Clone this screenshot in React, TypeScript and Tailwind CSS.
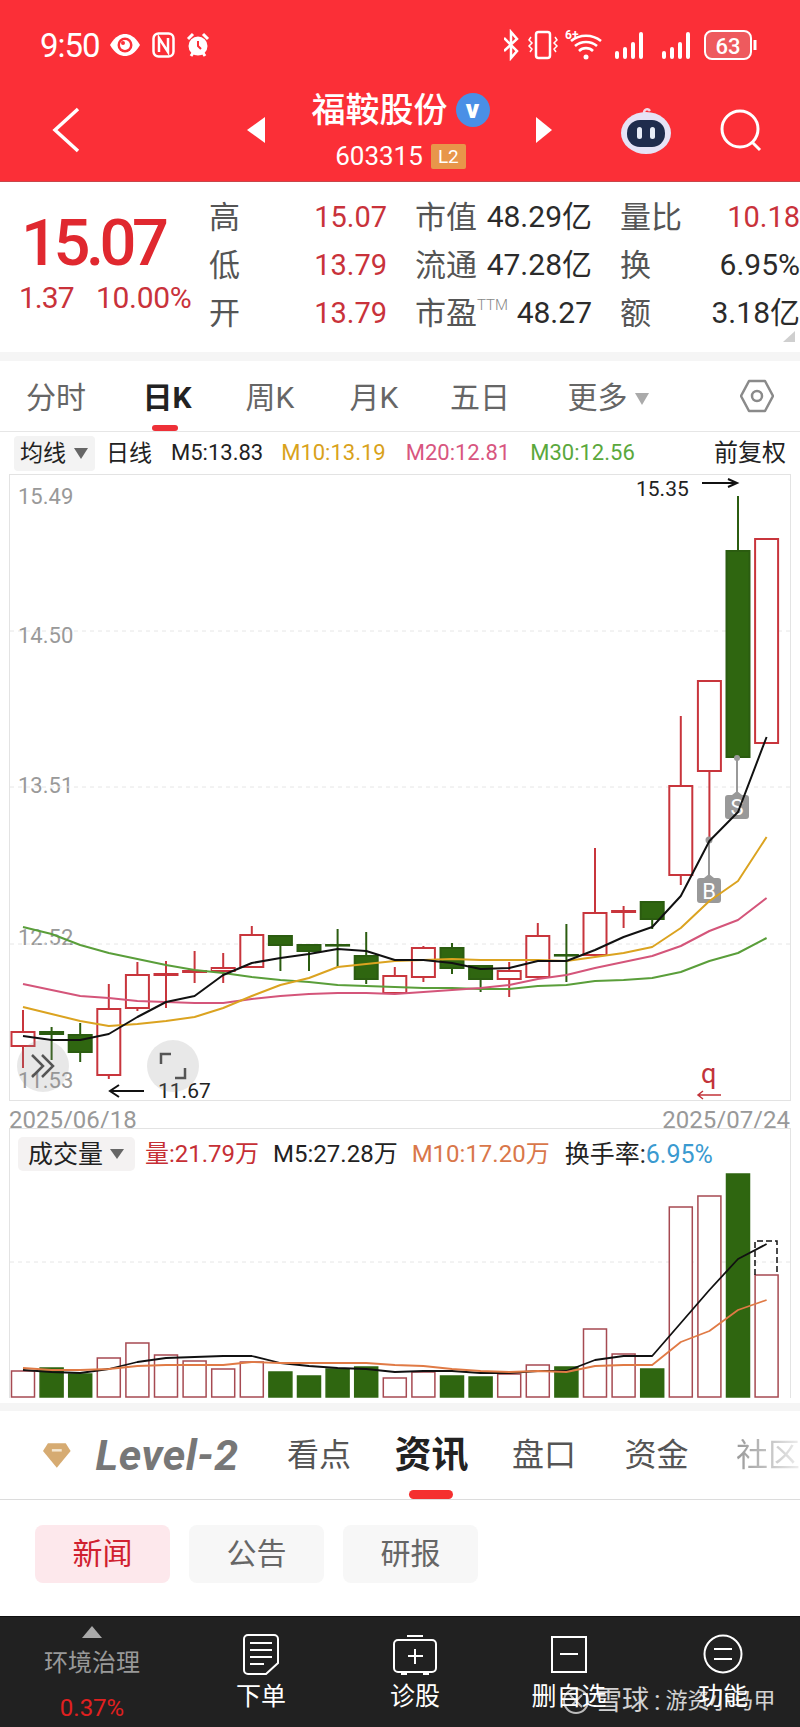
import React from "react";

const X = (i: number) => 23 + i * 28.6;

// type, body top, body bottom, wick top, wick bottom (page y)
const candles: [string, number, number, number, number][] = [
    ["r", 1032, 1046, 1010, 1068],
    ["g", 1032, 1034, 1027, 1060],
    ["g", 1035, 1052, 1023, 1062],
    ["r", 1009, 1075, 984, 1079],
    ["r", 975, 1008, 962, 1011],
    ["r", 974, 975, 961, 1008],
    ["r", 971, 972, 951, 983],
    ["r", 968, 971, 953, 983],
    ["r", 935, 967, 926, 967],
    ["g", 936, 945, 936, 971],
    ["g", 945, 951, 945, 971],
    ["g", 945, 945.6, 929, 967],
    ["g", 956, 979, 932, 984],
    ["r", 976, 993, 967, 993],
    ["r", 948, 977, 946, 982],
    ["g", 948, 968, 943, 974],
    ["g", 966, 979, 966, 992],
    ["r", 971, 979, 962, 997],
    ["r", 936, 977, 923, 977],
    ["g", 955, 955.6, 924, 982],
    ["r", 913, 955, 848, 955],
    ["r", 911, 912, 906, 928],
    ["g", 902, 919, 902, 929],
    ["r", 786, 875, 716, 885],
    ["r", 681, 771, 681, 840],
    ["g", 551, 757, 496, 757],
    ["r", 539, 743, 539, 743],
];

const ma5 = [1036, 1040, 1040, 1034, 1017, 1002, 996, 975, 963, 958, 954, 949, 951, 960, 960, 963, 969, 968, 961, 961, 950, 937, 927, 896, 841, 812, 737];
const ma10 = [1007, 1014, 1021, 1026, 1024, 1021, 1017, 1008, 996, 985, 978, 967, 964, 961, 960, 959, 960, 960, 960, 961, 957, 953, 947, 928, 901, 881, 837];
const ma20 = [984, 990, 996, 998, 1001, 1002, 1003, 1003, 999, 996, 994, 993, 993, 994, 992, 990, 988, 985, 979, 975, 968, 962, 956, 946, 931, 920, 898];
const ma30 = [927, 934, 945, 953, 959, 965, 970, 973, 977, 980, 982, 985, 986, 987, 988, 988, 989, 989, 986, 985, 981, 980, 978, 972, 961, 953, 938];

const volTops = [1371, 1368, 1374, 1358, 1343, 1355, 1361, 1369, 1362, 1372, 1376, 1369, 1367, 1378, 1372, 1376, 1377, 1374, 1365, 1367, 1329, 1354, 1369, 1207, 1196, 1174, 1275];
const volMa5 = [1370, 1372, 1373, 1369, 1362, 1358, 1357, 1356, 1356, 1363, 1366, 1368, 1369, 1372, 1371, 1371, 1373, 1373, 1371, 1371, 1360, 1356, 1356, 1323, 1290, 1259, 1244];
const volMa10 = [1368, 1370, 1370, 1369, 1366, 1365, 1365, 1365, 1362, 1363, 1363, 1363, 1363, 1365, 1366, 1369, 1371, 1372, 1371, 1372, 1366, 1365, 1365, 1342, 1331, 1310, 1300];

const pts = (ys: number[]) => ys.map((y, i) => `${X(i)},${y}`).join(" ");

function StatusIcons() {
    return (
        <svg width="253" height="32" viewBox="0 0 253 32" className="block" fill="none" stroke="#fff" strokeWidth="2">
            <path d="M0 9l13 13-6 7V3l6 7L0 22" strokeWidth="2.500"/>
            <rect x="32" y="3" width="14" height="26" rx="2.5" strokeWidth="2.5"/>
            <path d="M27 8l-2 3 3 3-3 3 3 3-2 3M51 8l2 3-3 3 3 3-3 3 2 3" strokeWidth="1.5"/>
            <path d="M67 12a24 24 0 0 1 30 0M71 17a17 17 0 0 1 22 0M75 22a10 10 0 0 1 14 0" strokeWidth="2.6"/>
            <circle cx="82" cy="28" r="2.500" fill="#fff" stroke="none"/>
            <text x="61" y="10" fill="#fff" stroke="none" fontSize="12" fontWeight="700">6+</text>
            <g fill="#fff" stroke="none">
                <rect x="111" y="22" width="4" height="8" rx="2"/>
                <rect x="119" y="18" width="4" height="12" rx="2"/>
                <rect x="127" y="13" width="4" height="17" rx="2"/>
                <rect x="135" y="3" width="4" height="27" rx="2"/>
                <rect x="158" y="22" width="4" height="8" rx="2"/>
                <rect x="166" y="18" width="4" height="12" rx="2"/>
                <rect x="174" y="13" width="4" height="17" rx="2"/>
                <rect x="182" y="3" width="4" height="27" rx="2"/>
            </g>
            <rect x="201" y="2" width="46" height="28" rx="7" fill="#ee5a5e"/>
            <path d="M251 11v10" strokeWidth="3"/>
            <text x="224" y="24.500" textAnchor="middle" fill="#fff" stroke="none" fontSize="22" fontWeight="500">63</text>
        </svg>
    );
}

function Header() {
    return (
        <div className="h-[181px] bg-[#fb2f37] text-white">
            <div className="flex h-[90px] items-center justify-between pl-[40px] pr-[43px]">
                <div className="flex items-center">
                    <span className="text-[33px] leading-none tracking-[-1px]">9:50</span>
                    <svg className="ml-[9px]" width="32" height="24" viewBox="0 0 32 24">
                        <path d="M1 12C6 3 12 1 16 1s10 2 15 11c-5 9-11 11-15 11S6 21 1 12z" fill="#fff"/>
                        <circle cx="16" cy="12" r="7.500" fill="#fb2f37"/>
                        <circle cx="16" cy="12" r="5" fill="#fff"/>
                        <circle cx="14" cy="10" r="2" fill="#fb2f37"/>
                    </svg>
                    <svg className="ml-[11px]" width="23" height="26" viewBox="0 0 23 26" fill="none" stroke="#fff" strokeWidth="2.500">
                        <rect x="1.500" y="1.500" width="20" height="23" rx="5"/>
                        <path d="M7 20V6l9 14V6"/>
                    </svg>
                    <svg className="ml-[11px]" width="24" height="26" viewBox="0 0 24 26" fill="none" stroke="#fff" strokeWidth="3">
                        <circle cx="12" cy="14" r="8" fill="#fff"/>
                        <path d="M12 9v5l3 3" stroke="#fb2f37" strokeWidth="2"/>
                        <path d="M2 7l5-5M22 7l-5-5M5 24l2-3M19 24l-2-3"/>
                    </svg>
                </div>
                <StatusIcons/>
            </div>
            <div className="flex h-[91px] items-start">
                <div className="flex h-[80px] w-[247px] items-center pl-[52px]">
                    <svg width="28" height="46" viewBox="0 0 28 46" fill="none" stroke="#fff" strokeWidth="3.500">
                        <path d="M26 2L3 23l23 21"/>
                    </svg>
                </div>
                <div className="flex h-[80px] w-[18px] items-center">
                    <div className="h-0 w-0 border-y-[13px] border-r-[18px] border-y-transparent border-r-white"/>
                </div>
                <div className="flex w-[271px] flex-col items-center">
                    <div className="flex h-[40px] items-center">
                        <span className="text-[34px] leading-none font-medium">福鞍股份</span>
                        <span className="ml-[8px] flex h-[34px] w-[34px] items-center justify-center rounded-full bg-[#4a8fe6] pb-[3px] text-[26px] font-black leading-none">v</span>
                    </div>
                    <div className="mt-[13px] flex h-[26px] items-center">
                        <span className="text-[26px] leading-none">603315</span>
                        <span className="ml-[8px] flex h-[25px] w-[35px] items-center justify-center rounded-[2px] bg-[#e8964a] text-[19px] leading-none">L2</span>
                    </div>
                </div>
                <div className="flex h-[80px] w-[16px] items-center">
                    <div className="h-0 w-0 border-y-[13px] border-l-[16px] border-y-transparent border-l-white"/>
                </div>
                <div className="ml-[68px] flex h-[80px] items-center">
                    <svg width="52" height="48" viewBox="0 0 52 48">
                        <path d="M24 7c0-4 4-5 6-2" fill="none" stroke="#f3d9e6" strokeWidth="2.500"/>
                        <ellipse cx="26" cy="27" rx="25" ry="21" fill="#e6e3f6"/>
                        <rect x="7" y="14" width="38" height="27" rx="13" fill="#1f2c4d"/>
                        <rect x="17" y="21" width="5" height="12" rx="2.500" fill="#e8edf8"/>
                        <rect x="30" y="21" width="5" height="12" rx="2.500" fill="#e8edf8"/>
                    </svg>
                </div>
                <div className="ml-[48px] flex h-[80px] items-center">
                    <svg width="42" height="44" viewBox="0 0 42 44" fill="none" stroke="#fff" strokeWidth="3">
                        <circle cx="20" cy="21" r="18"/>
                        <path d="M32 34l8 8"/>
                    </svg>
                </div>
            </div>
        </div>
    );
}

function Quote() {
    const red = "text-[29px] text-[#c9323a]";
    const dark = "text-[30px] text-[#2b2b2b]";
    const rows = [
        ["高", "15.07", "市值", "48.29亿", "量比", "10.18", true],
        ["低", "13.79", "流通", "47.28亿", "换", "6.95%", false],
        ["开", "13.79", "市盈", "48.27", "额", "3.18亿", false],
    ] as const;
    return (
        <div className="relative flex h-[171px] border-t border-[#c9464a] bg-white">
            <div className="w-[209px] pl-[21px] pt-[31px]">
                <div className="h-[60px] text-[65px] leading-[60px] font-medium tracking-[-4.500px] text-[#e0282f]">15.07</div>
                <div className="mt-[10px] flex h-[30px] items-center text-[30px] leading-none text-[#c9323a]">
                    <span className="-ml-[2px] w-[77px] tracking-[-1px]">1.37</span>
                    <span className="tracking-[-0.3px]">10.00%</span>
                </div>
            </div>
            <div className="pt-[11px]">
                {rows.map(r => (
                    <div key={r[0]} className="grid h-[48px] w-[591px] grid-cols-[178px_177px_180px] items-center gap-x-[28px] leading-none">
                        <div className="flex items-center justify-between">
                            <span className="text-[31px] text-[#555]">{r[0]}</span>
                            <span className={red}>{r[1]}</span>
                        </div>
                        <div className="flex items-center justify-between">
                            <span className="flex items-start text-[31px] text-[#555]">
                                {r[2]}
                                {r[2] === "市盈" && <span className="text-[15px] font-light text-[#888]">TTM</span>}
                            </span>
                            <span className={dark}>{r[3]}</span>
                        </div>
                        <div className="flex items-center justify-between">
                            <span className="text-[31px] text-[#555]">{r[4]}</span>
                            <span className={r[6] ? red : dark}>{r[5]}</span>
                        </div>
                    </div>
                ))}
            </div>
            <div className="absolute bottom-[10px] right-[5px] h-0 w-0 border-b-[11px] border-l-[12px] border-b-[#cfcfcf] border-l-transparent"/>
        </div>
    );
}

function Tabs() {
    return (
        <div className="relative flex h-[71px] items-center border-b border-[#e6e6e6] bg-white text-[30px] leading-none text-[#666]">
            <div className="grid h-full grid-cols-[112px_110px_96px_112px_100px_156px] items-center pt-[3px] text-center">
                <span>分时</span>
                <span className="relative flex h-full items-center justify-center font-bold text-[#222]">
                    日K
                    <span className="absolute bottom-0 left-[40px] h-[6px] w-[26px] rounded-full bg-[#ee3038]"/>
                </span>
                <span>周K</span>
                <span>月K</span>
                <span>五日</span>
                <span className="flex items-center justify-center">
                    更多
                    <span className="ml-[7px] mt-[3px] h-0 w-0 border-x-[7px] border-t-[12px] border-x-transparent border-t-[#aaa]"/>
                </span>
            </div>
            <svg className="ml-auto mr-[26px]" width="34" height="34" viewBox="0 0 34 34" fill="none" stroke="#8a8a8a" strokeWidth="2.500">
                <path d="M9 2h16l8 15-8 15H9L1 17z" strokeLinejoin="round"/>
                <circle cx="17" cy="17" r="5"/>
            </svg>
        </div>
    );
}

function Legend() {
    return (
        <div className="flex h-[42px] items-center bg-white pl-[14px] text-[22px] leading-none text-[#222]">
            <div className="flex h-[35px] w-[81px] items-center rounded-[4px] bg-[#f3f3f3] pl-[6px]">
                <span className="text-[23px]">均线</span>
                <span className="ml-[8px] h-0 w-0 border-x-[7px] border-t-[11px] border-x-transparent border-t-[#666]"/>
            </div>
            <span className="ml-[11px] text-[23px]">日线</span>
            <span className="ml-[19px]">M5:13.83</span>
            <span className="ml-[18px] text-[#d9a21b]">M10:13.19</span>
            <span className="ml-[20px] text-[#d8567f]">M20:12.81</span>
            <span className="ml-[20px] text-[#5aa83c]">M30:12.56</span>
            <span className="ml-auto pr-[14px] text-[24px]">前复权</span>
        </div>
    );
}

function KChart() {
    return (
        <div className="relative mx-[9px] h-[627px] w-[782px] border border-[#e3e3e3] bg-white">
            {[["15.49", 9], ["14.50", 148], ["13.51", 298], ["12.52", 450], ["11.53", 593]].map(([t, top]) => (
                <span key={t} style={{top: Number(top)}} className="absolute left-[8px] text-[22px] leading-[26px] text-[#999]">{t}</span>
            ))}
            <svg className="relative block" width="780" height="625" viewBox="10 475 780 625" fill="none">
                {[631, 787, 944].map(y => (
                    <path key={y} d={`M10 ${y}H790`} stroke="#e6e6e6" strokeDasharray="4 4"/>
                ))}
                {candles.map(([t, top, bot, wt, wb], i) => {
                    const x = X(i);
                    const c = t === "r" ? "#c8353c" : "#2b5c10";
                    return (
                        <g key={i}>
                            <path d={`M${x} ${wt}V${wb}`} stroke={c} strokeWidth="2"/>
                            <rect x={x - 11.500} y={top} width={23} height={bot - top} stroke={c} strokeWidth="2"
                                  fill={t === "r" ? "#fff" : "#2f6610"}/>
                        </g>
                    );
                })}
                <path d="M709 840V878M737 757V795" stroke="#999" strokeWidth="2"/>
                <circle cx="709" cy="840" r="3.500" fill="#999"/>
                <circle cx="737" cy="758" r="3" fill="#999"/>
                <path d="M700 878h4l5-4 5 4h4a3 3 0 0 1 3 3v19a3 3 0 0 1-3 3h-18a3 3 0 0 1-3-3v-19a3 3 0 0 1 3-3z" fill="#999"/>
                <path d="M728 795h4l5-4 5 4h4a3 3 0 0 1 3 3v18a3 3 0 0 1-3 3h-18a3 3 0 0 1-3-3v-18a3 3 0 0 1 3-3z" fill="#999"/>
                <text x="709" y="899" textAnchor="middle" fontSize="22" fill="#fff">B</text>
                <text x="737" y="815" textAnchor="middle" fontSize="22" fill="#fff">S</text>
                <polyline points={pts(ma30)} stroke="#5a9e3a" strokeWidth="2" strokeLinejoin="round"/>
                <polyline points={pts(ma20)} stroke="#d4557a" strokeWidth="2" strokeLinejoin="round"/>
                <polyline points={pts(ma10)} stroke="#dba320" strokeWidth="2" strokeLinejoin="round"/>
                <polyline points={pts(ma5)} stroke="#111" strokeWidth="2" strokeLinejoin="round"/>
                <path d="M702 483H737M728 479l9 4-9 4" stroke="#111" strokeWidth="2"/>
                <path d="M144 1091H110M119 1085l-9 6 9 6" stroke="#111" strokeWidth="2"/>
                <path d="M721 1095H698M703 1091l-5 4 5 4" stroke="#c2333a" strokeWidth="1.500"/>
            </svg>
            <span className="absolute left-[626px] top-[2px] text-[21px] leading-[24px] text-[#222]">15.35</span>
            <span className="absolute left-[148px] top-[604px] text-[21px] leading-[24px] text-[#222]">11.67</span>
            <span className="absolute left-[691px] top-[586px] text-[27px] leading-[26px] text-[#c2333a]">q</span>
            <div className="absolute left-[7px] top-[565px] flex h-[52px] w-[52px] items-center justify-center rounded-full bg-[#8a8a8a]/20">
                <svg width="28" height="26" viewBox="0 0 28 26" fill="none" stroke="#555" strokeWidth="2.500">
                    <path d="M3 2l11 11L3 24M13 2l11 11-11 11"/>
                </svg>
            </div>
            <div className="absolute left-[137px] top-[565px] flex h-[52px] w-[52px] items-center justify-center rounded-full bg-[#8a8a8a]/20">
                <svg width="28" height="28" viewBox="0 0 28 28" fill="none" stroke="#555" strokeWidth="2.500">
                    <path d="M12 2H2v10M16 26h10V16"/>
                </svg>
            </div>
        </div>
    );
}

function DateRow() {
    return (
        <div className="flex h-[27px] items-center justify-between bg-white pl-[9px] pr-[10px] pt-[10px] text-[24px] leading-none text-[#999]">
            <span>2025/06/18</span>
            <span>2025/07/24</span>
        </div>
    );
}

function VolChart() {
    return (
        <div className="relative mx-[9px] h-[270px] w-[782px] border-x border-t border-[#e3e3e3] bg-white">
            <div className="absolute left-[8px] top-[8px] flex items-center text-[24px] leading-none">
                <div className="flex h-[34px] w-[117px] items-center rounded-[5px] bg-[#f4f2f2] pl-[10px]">
                    <span className="text-[25px] text-[#222]">成交量</span>
                    <span className="ml-[7px] h-0 w-0 border-x-[7px] border-t-[10px] border-x-transparent border-t-[#666]"/>
                </div>
                <span className="ml-[10px] text-[#c62f35]">量:21.79万</span>
                <span className="ml-[14px] text-[#222]">M5:27.28万</span>
                <span className="ml-[14px] text-[#d9774a]">M10:17.20万</span>
                <span className="ml-[15px] text-[25px] text-[#222]">换手率:<span className="text-[#3a9ad0]">6.95%</span></span>
            </div>
            <svg className="block" width="780" height="269" viewBox="10 1129 780 269" fill="none">
                <path d="M10 1262H790" stroke="#e6e6e6" strokeDasharray="4 4"/>
                {volTops.map((top, i) => {
                    const green = [1, 2, 9, 10, 11, 12, 15, 16, 19, 22, 25].includes(i);
                    return (
                        <rect key={i} x={X(i) - 11.500} y={top} width={23} height={1397 - top}
                              stroke={green ? "#2f6610" : "#a64a52"} strokeWidth="1.500" fill={green ? "#2f6610" : "#fff"}/>
                    );
                })}
                <path d="M755 1275V1241H777V1275" stroke="#111" strokeWidth="1.500" strokeDasharray="6 3"/>
                <polyline points={pts(volMa5)} stroke="#111" strokeWidth="1.800" strokeLinejoin="round"/>
                <polyline points={pts(volMa10)} stroke="#e07a45" strokeWidth="1.800" strokeLinejoin="round"/>
            </svg>
        </div>
    );
}

function SubTabs() {
    return (
        <div className="relative flex h-[89px] items-center overflow-hidden border-b border-[#dcdcdc] bg-white text-[32px] leading-none whitespace-nowrap text-[#555]">
            <svg className="ml-[42px]" width="30" height="27" viewBox="0 0 30 27">
                <path d="M6 1h18l5 8-14 17L1 9z" fill="#d6ab72"/>
                <rect x="10" y="7" width="10" height="2.500" fill="#f4e7d2"/>
            </svg>
            <span className="ml-[24px] w-[194px] text-[43px] font-bold italic tracking-[0.5px] text-[#777]">Level-2</span>
            <span className="w-[109px]">看点</span>
            <span className="relative flex h-full w-[119px] items-center text-[37px] font-bold text-[#222]">
                资讯
                <span className="absolute bottom-0 left-[14px] h-[9px] w-[44px] rounded-full bg-[#f5302f]"/>
            </span>
            <span className="w-[114px]">盘口</span>
            <span className="w-[113px]">资金</span>
            <span className="bg-linear-to-r from-[#999] to-[#eee] bg-clip-text text-transparent">社区</span>
        </div>
    );
}

function Chips() {
    return (
        <div className="flex h-[116px] items-start gap-x-[19px] bg-white pl-[35px] pt-[25px] text-[30px] leading-none">
            <span className="flex h-[58px] w-[135px] items-center justify-center rounded-[8px] bg-[#fde8ec] text-[#d0202f]">新闻</span>
            <span className="flex h-[58px] w-[135px] items-center justify-center rounded-[8px] bg-[#f7f7f7] text-[#666]">公告</span>
            <span className="flex h-[58px] w-[135px] items-center justify-center rounded-[8px] bg-[#f7f7f7] text-[#666]">研报</span>
        </div>
    );
}

function BottomBar() {
    return (
        <div className="relative grid h-[112px] grid-cols-[184px_154px_154px_154px_154px] border-t border-[#111] bg-[#212121] text-[25px] leading-none text-white">
            <div className="flex flex-col items-center pt-[9px]">
                <span className="h-0 w-0 border-x-[10px] border-b-[12px] border-x-transparent border-b-[#aaa]"/>
                <span className="mt-[13px] text-[24px] text-[#999]">环境治理</span>
                <span className="mt-[21px] text-[24px] text-[#e02020]">0.37%</span>
            </div>
            <div className="flex flex-col items-center pt-[17px]">
                <svg width="36" height="41" viewBox="0 0 36 41" fill="none" stroke="#fff" strokeWidth="2">
                    <path d="M5 1h26a4 4 0 0 1 4 4v24L23 40H5a4 4 0 0 1-4-4V5a4 4 0 0 1 4-4z"/>
                    <path d="M7 9h22M7 16h22M7 23h22M7 30h14"/>
                </svg>
                <span className="mt-[9px]">下单</span>
            </div>
            <div className="flex flex-col items-center pt-[17px]">
                <svg width="44" height="41" viewBox="0 0 44 41" fill="none" stroke="#fff" strokeWidth="2">
                    <path d="M14 2h16M5 6h34a4 4 0 0 1 4 4v24a4 4 0 0 1-4 4H5a4 4 0 0 1-4-4V10a4 4 0 0 1 4-4zM8 40h6M30 40h6"/>
                    <path d="M22 15v15M15 22h15"/>
                </svg>
                <span className="mt-[9px]">诊股</span>
            </div>
            <div className="flex flex-col items-center pt-[19px]">
                <svg width="36" height="37" viewBox="0 0 36 37" fill="none" stroke="#fff" strokeWidth="2">
                    <rect x="1" y="1" width="34" height="35"/>
                    <path d="M9 18h18"/>
                </svg>
                <span className="mt-[11px]">删自选</span>
            </div>
            <div className="flex flex-col items-center pt-[17px]">
                <svg width="40" height="40" viewBox="0 0 40 40" fill="none" stroke="#fff" strokeWidth="2">
                    <circle cx="20" cy="20" r="18.500"/>
                    <path d="M11 15h18M11 25h18"/>
                </svg>
                <span className="mt-[10px]">功能</span>
            </div>
            <div className="absolute left-[562px] top-[70px] flex items-center text-[27px] leading-none text-white/80">
                <svg width="28" height="28" viewBox="0 0 28 28" fill="none" stroke="#fff" strokeOpacity="0.7" strokeWidth="2">
                    <circle cx="14" cy="14" r="12"/>
                    <path d="M8 8l12 12M20 8L10 18"/>
                </svg>
                <span className="ml-[5px]">雪球</span>
                <span className="mx-[5px]">:</span>
                <span className="text-[22px]">游资小马甲</span>
            </div>
        </div>
    );
}

export default function App() {
    return (
        <div className="h-[1727px] w-[800px] overflow-hidden bg-white font-['Roboto','Noto_Sans_CJK_SC',sans-serif]">
            <Header/>
            <Quote/>
            <div className="h-[9px] bg-[#f5f5f5]"/>
            <Tabs/>
            <Legend/>
            <KChart/>
            <DateRow/>
            <VolChart/>
            <div className="h-[5px] bg-white"/>
            <div className="h-[8px] bg-[#f5f5f5]"/>
            <SubTabs/>
            <Chips/>
            <BottomBar/>
        </div>
    );
}
